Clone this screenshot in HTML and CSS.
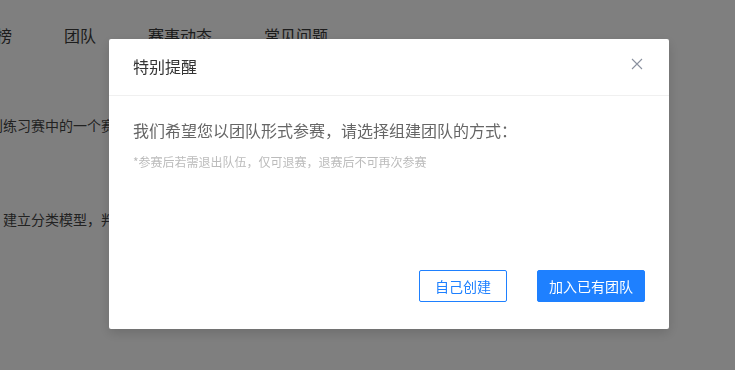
FILE: index.html
```html
<!DOCTYPE html>
<html lang="zh-CN">
<head>
<meta charset="utf-8">
<title>特别提醒</title>
<link rel="stylesheet" href="styles.css">
</head>
<body>
<div class="page">
  <nav class="nav">
    <span class="nav-item">排行榜</span>
    <span class="nav-item">团队</span>
    <span class="nav-item">赛事动态</span>
    <span class="nav-item">常见问题</span>
  </nav>
  <p class="para p1">本次比赛到练习赛中的一个赛题，参赛者需要根据给定的数据集进行分析。</p>
  <p class="para p2">建立分类模型，判断样本所属类别并提交结果。</p>
</div>
<div class="overlay">
  <div class="modal">
    <div class="modal-header">
      <span class="modal-title">特别提醒</span>
      <svg class="close" width="12" height="12" viewBox="0 0 12 12"><path d="M1 1L11 11M11 1L1 11" stroke="#8a919f" stroke-width="1.1" fill="none"/></svg>
    </div>
    <div class="modal-body">
      <p class="msg">我们希望您以团队形式参赛，请选择组建团队的方式：</p>
      <p class="note">*参赛后若需退出队伍，仅可退赛，退赛后不可再次参赛</p>
    </div>
    <div class="modal-footer">
      <button class="btn btn-outline">自己创建</button>
      <button class="btn btn-primary">加入已有团队</button>
    </div>
  </div>
</div>
</body>
</html>
```
FILE: styles.css
```css
* { box-sizing: border-box; }
html, body { margin: 0; padding: 0; }
body {
  width: 735px;
  height: 370px;
  overflow: hidden;
  background: #fff;
  font-family: "Noto Sans CJK SC", "Noto Sans", sans-serif;
  color: #333;
}
.page { padding-top: 24px; }
.nav {
  display: flex;
  gap: 52px;
  margin-left: -36px;
  font-size: 16px;
  line-height: 22px;
  color: #3a3a3a;
  white-space: nowrap;
}
.para {
  margin: 0;
  font-size: 14px;
  line-height: 22px;
  color: #444;
  white-space: nowrap;
}
.p1 { margin-top: 68px; margin-left: -67px; }
.p2 { margin-top: 72px; margin-left: 3px; }

.overlay {
  position: fixed;
  inset: 0;
  background: rgba(0, 0, 0, 0.5);
}
.modal {
  margin: 39px 0 0 109px;
  width: 560px;
  height: 290px;
  background: #fff;
  border-radius: 2px;
  display: flex;
  flex-direction: column;
  box-shadow: 0 4px 12px rgba(0, 0, 0, 0.15);
}
.modal-header {
  display: flex;
  align-items: center;
  justify-content: space-between;
  padding: 16px 26px 18px 24px;
  border-bottom: 1px solid #f0f0f0;
}
.modal-title {
  font-size: 16px;
  line-height: 22px;
  color: #333;
}
.close { display: block; margin-top: -4px; }
.modal-body {
  flex: 1;
  padding: 23px 24px 0;
}
.msg {
  margin: 0;
  font-size: 16px;
  line-height: 22px;
  color: #666;
}
.note {
  margin: 11px 0 0;
  font-size: 12px;
  line-height: 20px;
  color: #bbb;
}
.modal-footer {
  display: flex;
  justify-content: flex-end;
  gap: 30px;
  padding: 0 24px 27px;
}
.btn {
  height: 32px;
  border-radius: 2px;
  font-family: inherit;
  font-size: 14px;
  line-height: 30px;
  padding: 0;
  cursor: pointer;
}
.btn-outline {
  width: 88px;
  background: #fff;
  border: 1px solid #1e80ff;
  color: #1e80ff;
}
.btn-primary {
  width: 108px;
  background: #1e80ff;
  border: 1px solid #1e80ff;
  color: #fff;
}
```
